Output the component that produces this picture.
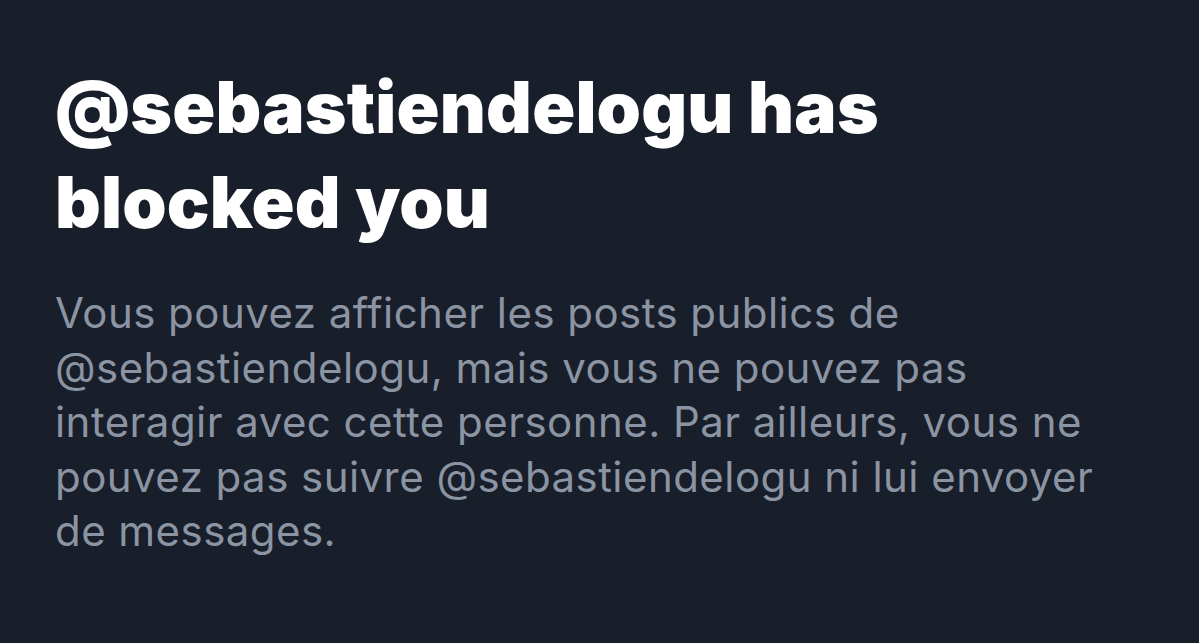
export default function App() {
  return (
    <div className="min-h-[643px] w-full bg-[#181e2a] px-[55px] pt-[60px] font-['Inter','Liberation_Sans',sans-serif]">
      <h1 className="text-[71px] font-black leading-[95px] tracking-[0.2px] text-white">
        @sebastiendelogu has
        <br />
        blocked you
      </h1>
      <p className="mt-[36px] text-[42px] font-normal leading-[54.5px] tracking-[0.45px] text-[#8b94a2]">
        Vous pouvez afficher les posts publics de
        <br />
        @sebastiendelogu, mais vous ne pouvez pas
        <br />
        interagir avec cette personne. Par ailleurs, vous ne
        <br />
        pouvez pas suivre @sebastiendelogu ni lui envoyer
        <br />
        de messages.
      </p>
    </div>
  );
}
